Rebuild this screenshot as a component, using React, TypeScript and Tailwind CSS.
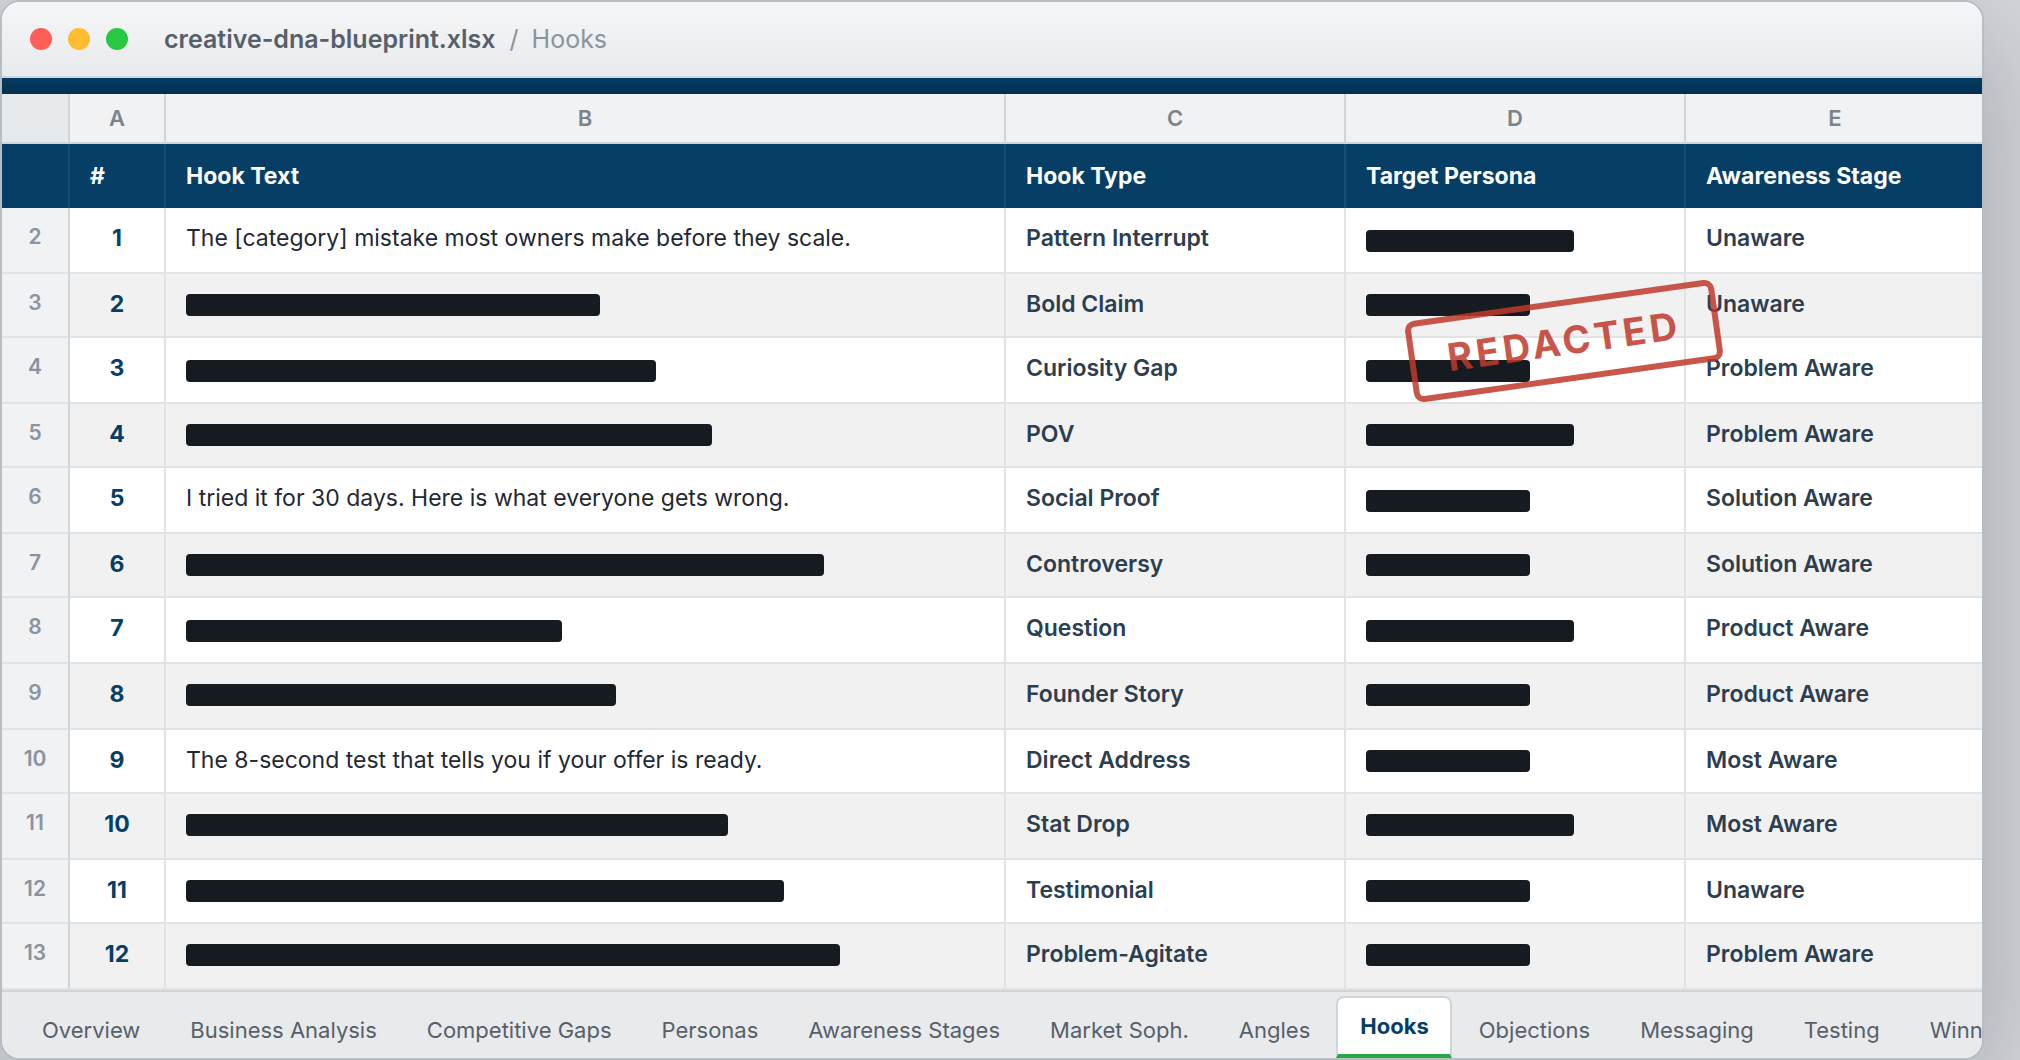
interface HookRow {
  hook: string | number;
  type: string;
  persona: 'long' | 'short';
  stage: string;
  tall: boolean;
  barTop: 'high' | 'low';
}

// a number in `hook` is the width of the redaction bar
const rows: HookRow[] = [
  { hook: 'The [category] mistake most owners make before they scale.', type: 'Pattern Interrupt', persona: 'long', stage: 'Unaware', tall: true, barTop: 'low' },
  { hook: 414, type: 'Bold Claim', persona: 'short', stage: 'Unaware', tall: false, barTop: 'high' },
  { hook: 470, type: 'Curiosity Gap', persona: 'short', stage: 'Problem Aware', tall: true, barTop: 'low' },
  { hook: 526, type: 'POV', persona: 'long', stage: 'Problem Aware', tall: false, barTop: 'high' },
  { hook: 'I tried it for 30 days. Here is what everyone gets wrong.', type: 'Social Proof', persona: 'short', stage: 'Solution Aware', tall: true, barTop: 'low' },
  { hook: 638, type: 'Controversy', persona: 'short', stage: 'Solution Aware', tall: false, barTop: 'high' },
  { hook: 376, type: 'Question', persona: 'long', stage: 'Product Aware', tall: true, barTop: 'low' },
  { hook: 430, type: 'Founder Story', persona: 'short', stage: 'Product Aware', tall: true, barTop: 'high' },
  { hook: 'The 8-second test that tells you if your offer is ready.', type: 'Direct Address', persona: 'short', stage: 'Most Aware', tall: false, barTop: 'high' },
  { hook: 542, type: 'Stat Drop', persona: 'long', stage: 'Most Aware', tall: true, barTop: 'high' },
  { hook: 598, type: 'Testimonial', persona: 'short', stage: 'Unaware', tall: false, barTop: 'high' },
  { hook: 654, type: 'Problem-Agitate', persona: 'short', stage: 'Problem Aware', tall: true, barTop: 'high' },
];

const tabs = [
  'Overview', 'Business Analysis', 'Competitive Gaps', 'Personas', 'Awareness Stages', 'Market Soph.',
  'Angles', 'Hooks', 'Objections', 'Messaging', 'Testing', 'Winn',
];

const columns = 'grid grid-cols-[68px_96px_840px_340px_340px_300px]';

function Bar({ width, low }: { width: number; low: boolean }) {
  return (
    <div
      className={`h-[22px] rounded bg-[#161b22] ${low ? 'mt-[22px]' : 'mt-[20px]'}`}
      style={{ width }}
    />
  );
}

function TitleBar() {
  return (
    <div className="flex h-[76px] shrink-0 items-center border-b-2 border-[#d0d5da] bg-gradient-to-b from-[#f4f6f8] to-[#e8eaec] pl-7">
      <div className="flex gap-4">
        <span className="size-[22px] rounded-full bg-[#ff5f57]" />
        <span className="size-[22px] rounded-full bg-[#febc2e]" />
        <span className="size-[22px] rounded-full bg-[#28c840]" />
      </div>
      <div className="ml-9 flex text-[25px] leading-8">
        <span className="font-semibold text-[#57606a]">creative-dna-blueprint.xlsx</span>
        <span className="ml-[14px] mr-[13px] text-[#8b949e]">/</span>
        <span className="text-[#8b949e]">Hooks</span>
      </div>
    </div>
  );
}

function Stamp() {
  return (
    <div className="absolute left-[1406px] top-[298px] flex h-[82px] w-[312px] -rotate-8 items-center justify-center rounded-[10px] border-[6px] border-[#c0392b] text-[38px] font-bold tracking-[3.8px] text-[#c0392b] opacity-85">
      REDACTED
    </div>
  );
}

export default function App() {
  return (
    <div className="h-[1060px] w-[2020px] overflow-hidden bg-[#d3d7db] font-['Inter',sans-serif]">
      <div className="relative flex h-[1060px] w-[1984px] flex-col overflow-hidden rounded-[20px] border-2 border-[#b6bec5] bg-white shadow-[0_32px_120px_rgba(0,0,0,0.24)]">
        <TitleBar />
        <div className="h-4 shrink-0 bg-gradient-to-b from-[#053d66] to-[#042f4f]" />

        <div className={`${columns} h-[50px] shrink-0 border-b-2 border-[#d0d5da] bg-[#f0f2f4] text-center text-[22px] font-semibold leading-[48px] text-[#7b848d]`}>
          <div className="border-r-2 border-[#d0d5da] bg-[#e6e9ec]" />
          {['A', 'B', 'C', 'D', 'E'].map((letter) => (
            <div key={letter} className="border-r-2 border-[#d0d5da]">{letter}</div>
          ))}
        </div>

        <div className={`${columns} h-16 shrink-0 bg-[#063e66] text-[23px] font-bold leading-[64px] text-white`}>
          <div className="border-r-2 border-[#164f74]" />
          {['#', 'Hook Text', 'Hook Type', 'Target Persona', 'Awareness Stage'].map((label) => (
            <div key={label} className="border-r-2 border-[#164f74] pl-5">{label}</div>
          ))}
        </div>

        {rows.map((row, i) => (
          <div
            key={i}
            className={`${columns} shrink-0 text-[23px] leading-[60px] ${row.tall ? 'h-[66px]' : 'h-16'} ${i % 2 ? 'bg-[#f1f1f1]' : 'bg-white'}`}
          >
            <div className="border-b-2 border-r-2 border-b-[#e1e3e5] border-r-[#d0d5da] bg-[#f0f2f4] text-center text-[21px] font-semibold leading-[58px] text-[#8b949e]">
              {i + 2}
            </div>
            <div className="border-b-2 border-r-2 border-[#e1e3e5] text-center font-bold text-[#063e66]">{i + 1}</div>
            <div className="border-b-2 border-r-2 border-[#e1e3e5] pl-5 text-[#1f2933]">
              {typeof row.hook === 'number' ? <Bar width={row.hook} low={row.barTop === 'low'} /> : row.hook}
            </div>
            <div className="border-b-2 border-r-2 border-[#e1e3e5] pl-5 font-semibold text-[#2c3e50]">{row.type}</div>
            <div className="border-b-2 border-r-2 border-[#e1e3e5] pl-5">
              <Bar width={row.persona === 'long' ? 208 : 164} low={row.barTop === 'low'} />
            </div>
            <div className="border-b-2 border-r-2 border-[#e1e3e5] pl-5 font-semibold text-[#2c3e50]">{row.stage}</div>
          </div>
        ))}

        <div className="flex flex-1 items-end gap-[2px] border-t-2 border-[#d0d5da] bg-[#e8eaec] pl-4 text-[22px] leading-[30px] text-[#57606a]">
          {tabs.map((tab) =>
            tab === 'Hooks' ? (
              <div key={tab} className="mr-px h-[62px] shrink-0 rounded-t-lg border-2 border-b-4 border-[#d0d5da] border-b-[#28a745] bg-white pl-[22px] pr-[21px] pt-[13px] font-bold text-[#063e66]">
                {tab}
              </div>
            ) : (
              <div key={tab} className="h-[46px] shrink-0 whitespace-nowrap px-6 pt-[3px]">{tab}</div>
            )
          )}
        </div>

        <Stamp />
      </div>
    </div>
  );
}
